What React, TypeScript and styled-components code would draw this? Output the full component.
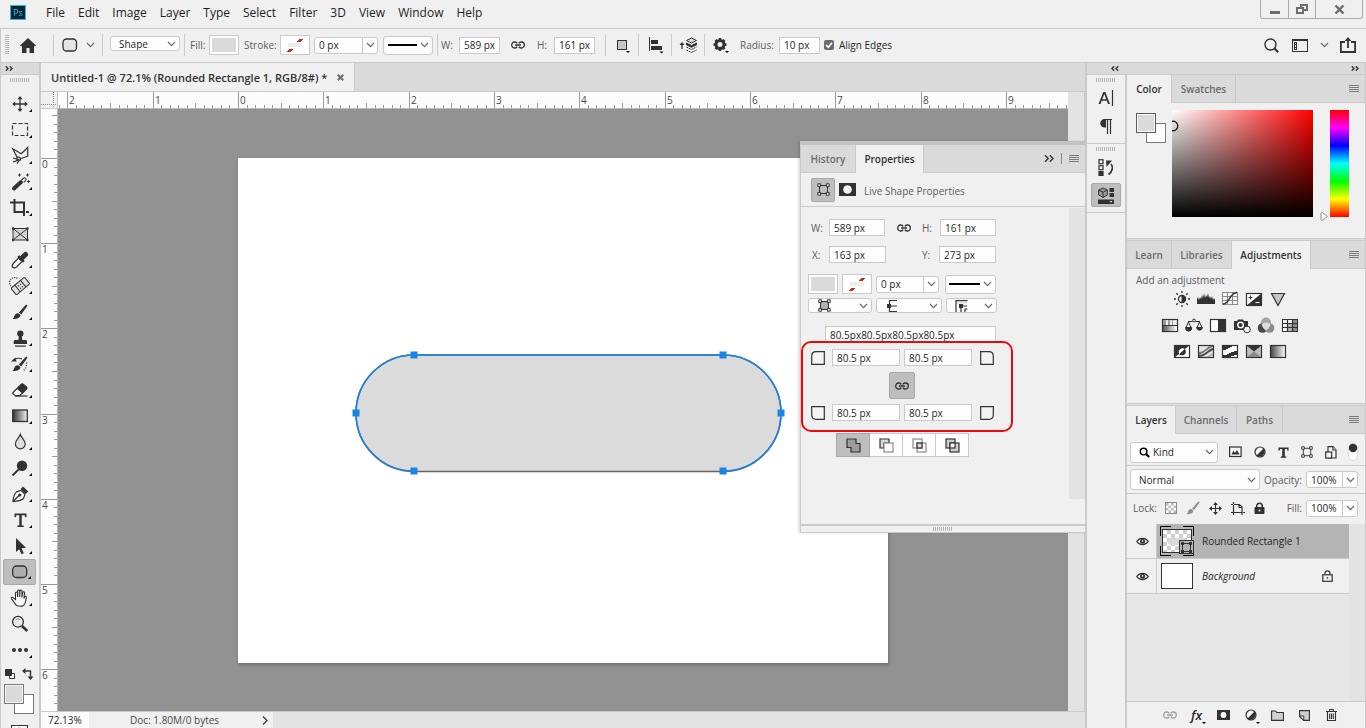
import React, { useLayoutEffect, useRef, useState } from 'react';
import styled, { createGlobalStyle, css } from 'styled-components';

const INK = '#323232';
const LINE = '#cacaca';
const PANEL = '#f0f0f0';
const SUNK = '#dadada';
const UI = '"Open Sans", "Noto Sans", sans-serif';

const Global = createGlobalStyle`
  *, *::before, *::after { box-sizing: border-box; }
  html, body { margin: 0; padding: 0; background: ${PANEL}; overflow: hidden; }
  body, button, input, select { font-family: ${UI}; font-size: 10px; color: #262626; line-height: 14px; }
  button { border: 0; background: none; padding: 0; margin: 0; }
  input, select { margin: 0; }
  svg { display: block; flex: none; }
`;

/* ---------- shared parts ---------- */

const Shell = styled.div`
  display: flex;
  flex-direction: column;
  height: 100vh;
  background: ${PANEL};
`;

const Spacer = styled.span<{ $w: number }>`
  width: ${(p) => p.$w}px;
  flex: none;
`;

const Gap = styled.div<{ $h: number }>`
  height: ${(p) => p.$h}px;
`;

const Field = styled.input<{ $w?: number }>`
  width: ${(p) => p.$w ?? 41}px;
  height: 17px;
  padding: 0 4px;
  border: 1px solid ${LINE};
  background: #fdfdfd;
  outline: none;
  flex: none;
`;

const Label = styled.label<{ $w?: number }>`
  color: #5c5c5c;
  white-space: nowrap;
  ${(p) => p.$w && css`width: ${p.$w}px;`}
  flex: none;
`;

const Caption = styled.span<{ $w: number }>`
  width: ${(p) => p.$w}px;
  color: #5c5c5c;
  white-space: nowrap;
  flex: none;
`;

const SelectBox = styled.span<{ $w: number; $h: number }>`
  position: relative;
  display: flex;
  align-items: center;
  width: ${(p) => p.$w}px;
  height: ${(p) => p.$h}px;
  border: 1px solid ${LINE};
  border-radius: 3px;
  background: #fdfdfd;
  flex: none;
  select {
    appearance: none;
    width: 100%;
    height: 100%;
    border: 0;
    background: none;
    padding: 0 16px 0 8px;
    outline: none;
  }
`;

const KindSelect = styled(SelectBox)`
  select { padding-left: 22px; }
`;

const OverLeft = styled.span<{ $x?: number }>`
  position: absolute;
  left: ${(p) => p.$x ?? 8}px;
  pointer-events: none;
`;
const OverRight = styled.span`
  position: absolute;
  right: 3px;
  pointer-events: none;
`;

const ComboBox = styled.span<{ $w: number }>`
  display: flex;
  align-items: stretch;
  width: ${(p) => p.$w}px;
  height: 17px;
  border: 1px solid ${LINE};
  border-radius: 3px;
  background: #fdfdfd;
  flex: none;
  input {
    flex: 1;
    min-width: 0;
    border: 0;
    background: none;
    padding: 0 4px;
    outline: none;
  }
  button {
    width: 15px;
    border-left: 1px solid ${LINE};
    display: grid;
    place-items: center;
  }
`;

const Swatch = styled.button`
  width: 30px;
  height: 20px;
  border: 1px solid ${LINE};
  background: #fff;
  padding: 2px;
  flex: none;
`;
const SwatchFill = styled.span`
  display: block;
  height: 14px;
  background: ${SUNK};
`;

const IconButton = styled.button<{ $w?: number; $h?: number; $on?: boolean }>`
  display: grid;
  place-items: center;
  width: ${(p) => p.$w ?? 24}px;
  height: ${(p) => p.$h ?? 24}px;
  flex: none;
  ${(p) => p.$on && css`
    background: #bebebe;
    border: 1px solid #a8a8a8;
    border-radius: 2px;
  `}
`;

const Chevron = () => (
  <svg width="9" height="6" viewBox="0 0 9 6" fill="none" stroke="#6a6a6a" strokeWidth="1.2">
    <path d="M1 1l3.5 3.6L8 1" />
  </svg>
);

const LinkIcon = ({ color = INK }: { color?: string }) => (
  <svg width="14" height="8" viewBox="0 0 14 8" fill="none" stroke={color} strokeWidth="1.3">
    <path d="M6.2 2.4A2.6 2.9 0 0 0 3.8 1H3.4a2.7 3 0 0 0 0 6h.4a2.6 2.9 0 0 0 2.4-1.4M7.8 2.4A2.6 2.9 0 0 1 10.2 1h.4a2.7 3 0 0 1 0 6h-.4a2.6 2.9 0 0 1-2.4-1.4M4 4h6" />
  </svg>
);

const NoStroke = () => (
  <svg width="24" height="14" viewBox="0 0 24 14" shapeRendering="crispEdges">
    <rect x="5" y="5" width="14" height="4" fill="#ededed" />
    <path d="M5 13h3l2-2h-3zM15 3h3l2-2h-3z" fill="#d3242a" stroke="#d3242a" strokeWidth="1" />
  </svg>
);

const StrokeLine = ({ w }: { w: number }) => (
  <svg width={w} height="2" viewBox={`0 0 ${w} 2`}>
    <rect width={w} height="2" fill="#000" />
  </svg>
);

const GripH = () => (
  <svg width="20" height="4" viewBox="0 0 20 4" shapeRendering="crispEdges">
    <path d="M.5 0v4M2.5 0v4M4.5 0v4M6.5 0v4M8.5 0v4M10.5 0v4M12.5 0v4M14.5 0v4M16.5 0v4M18.5 0v4" stroke="#b4b4b4" />
  </svg>
);

const DoubleArrow = ({ left }: { left?: boolean }) => (
  <svg width="8" height="5" viewBox="0 0 8 5" fill="none" stroke={INK} strokeWidth="1.4">
    {left ? <path d="M3.2 .3L1 2.5l2.2 2.2M7.2 .3L5 2.5l2.2 2.2" /> : <path d="M.8 .3L3 2.5.8 4.7M4.8 .3L7 2.5 4.8 4.7" />}
  </svg>
);

const PanelMenuIcon = () => (
  <svg width="10" height="8" viewBox="0 0 10 8" shapeRendering="crispEdges">
    <path d="M0 .5h10M0 2.5h10M0 4.5h10M0 6.5h10" stroke="#7c7c7c" />
  </svg>
);

const TypeIcon = ({ s = 12 }: { s?: number }) => (
  <svg width={s} height={s} viewBox="0 0 12 12">
    <path d="M.5.5h11v3.6h-1.1L9.8 2.2H7.4v8l1.7.3v1.2H2.9v-1.2l1.700-.3v-8H2.200l-.6 1.900H.5z" fill={INK} />
  </svg>
);

const TransformIcon = ({ s = 13, fill = 'none' }: { s?: number; fill?: string }) => (
  <svg width={s} height={s} viewBox="0 0 13 13" fill="none" stroke={INK}>
    <path d="M2 2.5h9M2 10.5h9M2.500 2v9M10.5 2v9" />
    <rect x="3" y="3" width="7" height="7" fill={fill} stroke="none" />
    <path d="M.8.8h2.800v2.800H.8zM9.400.8h2.800v2.800H9.400zM.8 9.400h2.800v2.800H.8zM9.400 9.400h2.800v2.800H9.400z" fill={PANEL} />
  </svg>
);

const BrushPaths = ({ color = INK }: { color?: string }) => (
  <g fill={color}>
    <path d="M19 4.800c.6.500.2 1.300-.4 2.200l-5.400 7.400-2.300-1.900 6-6.700c.7-.8 1.500-1.500 2.100-1z" />
    <path d="M10.200 13.200l2.300 1.900c-.3 2.600-2.900 4.200-8.200 4 1.600-.8 1.700-1.900 2.200-3.500.6-1.700 2-2.700 3.700-2.400z" />
  </g>
);

const ContrastIcon = () => (
  <svg width="12" height="12" viewBox="0 0 12 12">
    <circle cx="6" cy="6" r="5" fill="#f6f6f6" stroke={INK} strokeWidth="1.2" />
    <path d="M9.500 2.500A5 5 0 0 1 2.500 9.500z" fill={INK} />
  </svg>
);

/* ---------- menu bar ---------- */

const MenuBar = styled.header`
  display: flex;
  align-items: flex-start;
  height: 29px;
  border-bottom: 1px solid ${LINE};
  padding-left: 10px;
  flex: none;
`;
const PsBadge = styled.span`
  width: 16px;
  height: 15px;
  margin: 5px 14px 0 0;
  border: 1px solid #12c1f3;
  background: #0b1f2d;
  color: #22c4f5;
  font-size: 9px;
  line-height: 13px;
  text-align: center;
`;
const MenuList = styled.nav`
  display: flex;
  height: 26px;
  button {
    font-size: 12px;
    padding: 0 7px 0 6px;
    color: #1e1e1e;
  }
`;
const WindowButtons = styled.div`
  display: flex;
  height: 19px;
  margin: 0 3px 0 auto;
  border: 1px solid #a9a9a9;
  border-top: 0;
  border-radius: 0 0 3px 3px;
  button {
    width: 27px;
    display: grid;
    place-items: center;
  }
  button + button { border-left: 1px solid #a9a9a9; }
  button:last-child { width: 47px; }
`;

const menus = ['File', 'Edit', 'Image', 'Layer', 'Type', 'Select', 'Filter', '3D', 'View', 'Window', 'Help'];

const TopMenu = () => (
  <MenuBar>
    <PsBadge>Ps</PsBadge>
    <MenuList>
      {menus.map((m) => (
        <button key={m}>{m}</button>
      ))}
    </MenuList>
    <WindowButtons>
      <button aria-label="Minimize">
        <svg width="10" height="12" viewBox="0 0 10 12"><rect y="8" width="10" height="3" fill="#6d6d6d" /></svg>
      </button>
      <button aria-label="Restore">
        <svg width="12" height="10" viewBox="0 0 12 10" fill="#6d6d6d" fillRule="evenodd" shapeRendering="crispEdges">
          <path d="M4 0h8v7H8V5h2V2H6v1H4zM0 3h8v7H0zM2 5h4v3H2z" />
        </svg>
      </button>
      <button aria-label="Close">
        <svg width="11" height="9" viewBox="0 0 11 9" stroke="#6d6d6d" strokeWidth="2.4"><path d="M1.500.5l8 8M9.500.5l-8 8" /></svg>
      </button>
    </WindowButtons>
  </MenuBar>
);

/* ---------- options bar ---------- */

const OptionsBar = styled.section`
  display: flex;
  align-items: center;
  height: 34px;
  border-bottom: 1px solid ${LINE};
  border-left: 1px solid ${LINE};
  padding: 0 9px 1px 4px;
  flex: none;
`;
const Group = styled.div<{ $w: number; $pad?: number; $gap?: number; $last?: boolean; $lift?: number }>`
  display: flex;
  align-items: center;
  width: ${(p) => p.$w}px;
  height: 22px;
  padding-left: ${(p) => p.$pad ?? 0}px;
  padding-bottom: ${(p) => p.$lift ?? 0}px;
  gap: ${(p) => p.$gap ?? 0}px;
  border-right: ${(p) => (p.$last ? '0' : `1px solid ${LINE}`)};
  flex: none;
`;
const CheckLabel = styled.label`
  display: flex;
  align-items: center;
  gap: 5px;
  margin-left: 4px;
  white-space: nowrap;
`;
const CheckWrap = styled.span`
  display: grid;
  place-items: center;
  > * { grid-area: 1 / 1; pointer-events: none; }
  input {
    appearance: none;
    pointer-events: auto;
    width: 10px;
    height: 10px;
    border-radius: 2px;
    background: #6b6b6b;
  }
`;
const Push = styled.div`
  display: flex;
  align-items: center;
  gap: 10px;
  margin-left: auto;
`;

const Options = () => (
  <OptionsBar>
    <Group $w={49} $gap={10}>
      <svg width="4" height="20" viewBox="0 0 4 20" shapeRendering="crispEdges">
        <path d="M0 .5h4M0 2.5h4M0 4.5h4M0 6.5h4M0 8.5h4M0 10.5h4M0 12.5h4M0 14.5h4M0 16.5h4M0 18.5h4" stroke="#b4b4b4" />
      </svg>
      <IconButton $w={18} aria-label="Home">
        <svg width="16" height="15" viewBox="0 0 16 15"><path d="M8 0l8 7.500-1 1-1-.6V15H9.500v-5h-3v5H2V7.900l-1 .6-1-1z" fill={INK} /></svg>
      </IconButton>
    </Group>
    <Group $w={49} $pad={8} $gap={8}>
      <IconButton $w={16} aria-label="Rounded rectangle tool">
        <svg width="16" height="14" viewBox="0 0 16 14"><rect x="1" y="1" width="13.5" height="12" rx="3.5" fill="#e4e4e4" stroke={INK} strokeWidth="1.3" /></svg>
      </IconButton>
      <Chevron />
    </Group>
    <Group $w={82} $pad={7} $lift={3}>
      <SelectBox $w={70} $h={15}>
        <select aria-label="Tool mode" defaultValue="Shape"><option>Shape</option></select>
        <OverRight><Chevron /></OverRight>
      </SelectBox>
    </Group>
    <Group $w={253} $pad={5}>
      <Caption $w={19}>Fill:</Caption>
      <Swatch aria-label="Fill colour"><SwatchFill /></Swatch>
      <Spacer $w={5} />
      <Caption $w={36}>Stroke:</Caption>
      <Swatch aria-label="Stroke colour"><NoStroke /></Swatch>
      <Spacer $w={4} />
      <ComboBox $w={64}><input aria-label="Stroke width" defaultValue="0 px" /><button aria-label="Stroke width list"><Chevron /></button></ComboBox>
      <Spacer $w={5} />
      <SelectBox $w={50} $h={19}>
        <select aria-label="Stroke type"><option></option></select>
        <OverLeft $x={4}><StrokeLine w={29} /></OverLeft>
        <OverRight><Chevron /></OverRight>
      </SelectBox>
    </Group>
    <Group $w={168} $pad={3}>
      <Label $w={18} htmlFor="ow">W:</Label>
      <Field id="ow" defaultValue="589 px" />
      <Spacer $w={11} />
      <LinkIcon />
      <Spacer $w={12} />
      <Label $w={17} htmlFor="oh">H:</Label>
      <Field id="oh" defaultValue="161 px" />
    </Group>
    <Group $w={33} $pad={6}>
      <IconButton $w={22} aria-label="Path operations">
        <svg width="16" height="16" viewBox="0 0 16 16"><rect x="2.500" y="3.500" width="9" height="9" fill="#c8c8c8" stroke={INK} /><path d="M11 14h4l-2 2z" fill="#000" /></svg>
      </IconButton>
    </Group>
    <Group $w={33} $pad={6}>
      <IconButton $w={22} aria-label="Path alignment">
        <svg width="16" height="18" viewBox="0 0 16 18"><path d="M1.500 1v14" stroke={INK} /><path d="M3 4h7v4H3zM3 10h11v4H3z" fill={INK} /><path d="M11.500 15.500h4l-2 2z" fill="#000" /></svg>
      </IconButton>
    </Group>
    <Group $w={33} $pad={6}>
      <IconButton $w={22} aria-label="Path arrangement">
        <svg width="20" height="17" viewBox="0 0 20 17" fill="none" stroke={INK}>
          <path d="M3 12V6" strokeWidth="1.300" /><path d="M.5 8L3 5l2.500 3z" fill={INK} stroke="none" />
          <path d="M12.500 1l5 2.500-5 2.500-5-2.500z" fill="#d8d8d8" /><path d="M7.500 6l5 2.500 5-2.500v1.800l-5 2.500-5-2.500z" fill={INK} />
          <path d="M7.500 10l5 2.500 5-2.500M7.500 13l5 2.500 5-2.500" strokeDasharray="2 .6" />
        </svg>
      </IconButton>
    </Group>
    <Group $w={115} $pad={4} $last>
      <IconButton $w={24} aria-label="Shape settings">
        <svg width="18" height="18" viewBox="0 0 18 18">
          <circle cx="8" cy="8.500" r="4" fill="none" stroke={INK} strokeWidth="3" />
          <path d="M8 2v3M8 12v3M1.500 8.500h3M11.500 8.500h3M3.400 3.900l2 2M10.600 11.100l2 2M12.600 3.900l-2 2M5.400 11.100l-2 2" stroke={INK} strokeWidth="2.400" />
          <path d="M13 15h4l-2 2z" fill="#000" />
        </svg>
      </IconButton>
      <Spacer $w={7} />
      <Label $w={39} htmlFor="or">Radius:</Label>
      <Field id="or" defaultValue="10 px" />
    </Group>
    <CheckLabel>
      <CheckWrap>
        <input type="checkbox" defaultChecked />
        <svg width="10" height="10" viewBox="0 0 10 10" fill="none" stroke="#fff" strokeWidth="1.600"><path d="M2 5l2.300 2.300L8 2.700" /></svg>
      </CheckWrap>
      Align Edges
    </CheckLabel>
    <Push>
      <IconButton $w={18} aria-label="Search">
        <svg width="15" height="15" viewBox="0 0 15 15" fill="none" stroke={INK} strokeWidth="1.400"><circle cx="6.500" cy="6.500" r="5.500" /><path d="M10.500 10.500l3.700 3.700" strokeWidth="2" /></svg>
      </IconButton>
      <IconButton $w={20} aria-label="Workspace">
        <svg width="16" height="13" viewBox="0 0 16 13" fill={INK} fillRule="evenodd" shapeRendering="crispEdges">
          <path d="M0 0h16v13H0zM1 2h14v10H1z" /><path d="M2 3h3v8H2zM3 4h1v1H3zM3 6h1v2H3zM3 9h1v1H3z" />
        </svg>
      </IconButton>
      <Chevron />
      <IconButton $w={18} aria-label="Share">
        <svg width="16" height="16" viewBox="0 0 16 16" fill="none" stroke={INK} strokeWidth="1.800"><path d="M5 5H.9v10h14.200V5H11M8 11V2.500" /><path d="M8 0l3.300 4H4.700z" fill={INK} stroke="none" /></svg>
      </IconButton>
    </Push>
  </OptionsBar>
);

/* ---------- tool box ---------- */

const Main = styled.main`
  display: flex;
  flex: 1;
  min-height: 0;
`;
const ToolColumn = styled.aside`
  width: 41px;
  border-left: 1px solid ${LINE};
  border-right: 2px solid ${LINE};
  overflow: hidden;
  flex: none;
`;
const DockHead = styled.div`
  display: flex;
  align-items: center;
  justify-content: space-between;
  height: 12px;
  background: ${SUNK};
  border-bottom: 1px solid ${LINE};
  padding: 0 6px 0 4px;
  flex: none;
`;
const ToolGrip = styled.div`
  display: flex;
  height: 16px;
  padding: 3px 0 0 9px;
`;
const ToolButton = styled(IconButton)`
  position: relative;
  width: 33px;
  height: 26px;
  margin-left: 2px;
  padding-left: 1px;
`;
const Flyout = styled.svg`
  position: absolute;
  right: 4px;
  bottom: 5px;
`;
const ToolFoot = styled.div`
  padding: 5px 0 0 3px;
`;

const tools: { name: string; flat?: boolean; on?: boolean; art: React.ReactNode }[] = [
  { name: 'Move', art: <><path d="M12 6v12M6 12h12" stroke={INK} strokeWidth="1.300" /><path d="M12 4l2.600 3.200H9.400zM12 20l2.600-3.200H9.400zM4 12l3.200-2.600v5.200zM20 12l-3.200-2.600v5.200z" fill={INK} /></> },
  { name: 'Marquee', art: <rect x="4.500" y="5.500" width="15" height="12" fill="none" stroke={INK} strokeDasharray="4 2" strokeWidth="1.200" /> },
  { name: 'Lasso', art: <g fill="none" stroke={INK} strokeWidth="1.200"><path d="M9.500 14L4.700 4.700l8.600 5 6.400-6.200v8.700l-7.200 2.600" /><circle cx="10.700" cy="15" r="1.800" /><path d="M9 16c-1 1.500-2.500 2-4 1.500M10.500 17l-1.500 2.600M5 14l7 2" /></g> },
  { name: 'Magic wand', art: <g stroke={INK}><path d="M6 18.500l7-6.500" strokeWidth="4" strokeLinecap="round" /><path d="M13.500 10l2-1.900c1.500-1 3.300.8 2.200 2.300l-2 1.900" fill="#f6f6f6" strokeWidth="1.100" /><path d="M11.500 3.500v3M10 5h3M19.500 3.500v3M18 5h3M20.500 10v3M19 11.500h3" /></g> },
  { name: 'Crop', art: <path d="M6.500 3v13H16M2 6.500h14V20M18 16h3M2 6.500h3" fill="none" stroke={INK} strokeWidth="2" /> },
  { name: 'Frame', art: <g stroke={INK} fill="none"><rect x="5" y="6.500" width="14.500" height="11.500" fill="#d4d4d4" /><path d="M5 6.500L19.500 18M19.500 6.500L5 18" /><path d="M4 6.500h2M18.500 6.500h2M4 18h2M18.500 18h2" strokeWidth="2.600" /></g>, flat: true },
  { name: 'Eyedropper', art: <g stroke={INK}><path d="M11 9.500l3.500 3.500-6 6c-1.400 1-3 1-3.800.3-.7-.8-.5-2.300.5-3.800z" fill="#fafafa" strokeWidth="1.200" /><path d="M10.200 8.200l5.600 5.600" strokeWidth="2.600" /><path d="M13.500 10.500l4-4" strokeWidth="5" strokeLinecap="round" /></g> },
  { name: 'Healing brush', art: <g stroke={INK} fill="none"><g transform="rotate(-40 12 12)"><rect x="3.500" y="8" width="17.500" height="8.500" rx="1" fill="#e2e2e2" /><path d="M8.500 8v8.500M16 8v8.500" /><path d="M10.500 11h1M13 11h1M10.500 14h1M13 14h1" strokeWidth="1.400" /></g><path d="M3 12a4.500 4.500 0 0 1 7-7" strokeDasharray="1 1.200" strokeWidth="1.300" /></g> },
  { name: 'Brush', art: <BrushPaths /> },
  { name: 'Clone stamp', art: <g fill={INK}><circle cx="12.300" cy="7.600" r="3.200" /><path d="M11 9h2.600l.6 5h3.300c1 0 1.500.7 1.500 1.500V18H5.700v-2.500c0-.8.500-1.500 1.500-1.500h3.200zM7 19.500h10.800v1.200H7z" /></g> },
  { name: 'History brush', art: <><BrushPaths /><path d="M5 8.500c3-2.500 6-2.800 9-1.500" fill="none" stroke={INK} strokeWidth="1.200" /><path d="M3 9.500L7.500 5.500l1 4z" fill={INK} /><path d="M18.500 10.500c.5 4-1 7-4 8.500" fill="none" stroke={INK} strokeDasharray="1 1.500" strokeWidth="1.300" /></> },
  { name: 'Eraser', art: <g stroke={INK} strokeWidth="1.200"><path d="M5 14.500L13.500 6.200c.5-.5 1-.5 1.600 0l3.400 3c.5.500.5 1 0 1.500l-6.800 7H7.300l-2.300-2c-.4-.4-.4-.8 0-1.200z" fill="#fafafa" /><path d="M9.500 10.500l4-4c.5-.5 1-.5 1.600 0l3.400 3c.5.500.5 1 0 1.500l-4 4z" fill={INK} /><path d="M7 18h12.500" /></g> },
  { name: 'Gradient', art: <><defs><linearGradient id="tg"><stop stopColor="#333" /><stop offset="1" stopColor="#f4f4f4" /></linearGradient></defs><rect x="4.700" y="6" width="14.600" height="11.500" fill="url(#tg)" stroke={INK} strokeWidth="1.300" /></> },
  { name: 'Blur', art: <path d="M12.300 4.500c1 3.400 4.900 5.500 4.900 9.400a4.900 4.900 0 0 1-9.800 0c0-3.900 3.900-6 4.900-9.400z" fill="#dedede" stroke={INK} strokeWidth="1.200" /> },
  { name: 'Dodge', art: <><circle cx="14" cy="9.800" r="5.200" fill={INK} /><path d="M10.500 13.500l-6 6" stroke={INK} strokeWidth="1.800" /></> },
  { name: 'Pen', art: <g stroke={INK} fill="none" strokeWidth="1.200"><path d="M5 19.500c.3-4 1.500-7.800 3.500-9.600l4.500-1.500 4 3.800-1.500 4.300c-2 1.800-6 2.800-10.500 3z" fill="#f6f6f6" /><path d="M5 19.500l6-6" /><circle cx="11.800" cy="13" r="1" fill={INK} /><path d="M13.800 5.800l5.200 5" strokeWidth="3.600" /></g> },
  { name: 'Type', art: <path d="M6.500 5.500h12v3.800h-1.200l-.7-2H13.700v10l2 .4v1.200H9.300v-1.200l2-.4v-10H8.400l-.7 2H6.500z" fill={INK} /> },
  { name: 'Path selection', art: <path d="M8 4v14l3.200-2.800 2.200 5 2.400-1-2.200-5 4.400-.4z" fill={INK} /> },
  { name: 'Rounded rectangle', on: true, art: <rect x="4.700" y="6" width="14" height="11.500" rx="3.800" fill="#adadad" stroke={INK} strokeWidth="1.300" /> },
  { name: 'Hand', art: <path d="M8.500 19.500C6.500 17 5 14.500 3.500 12.800c-.8-1 .6-2 1.600-1.200l2.400 2V7c0-1.400 1.800-1.400 1.900 0l.3 4V5c0-1.400 2-1.400 2 0v6l.3-6c.1-1.300 2-1.200 2 0l-.1 6.500.8-5c.3-1.200 2-.9 1.800.4l-.6 5.600.7-1.600c.4-1 1.800-.7 1.700.4-.3 3-1 6.700-2.800 8.200-1.400 1-5 1-7 0z" fill="#fafafa" stroke={INK} strokeWidth="1.100" /> },
  { name: 'Zoom', flat: true, art: <g fill="none" stroke={INK}><circle cx="10" cy="9.800" r="5.400" fill="#ebebeb" strokeWidth="1.300" /><path d="M14 14l5.300 5" strokeWidth="2.600" /><path d="M8 8a3 3 0 0 1 4-.5" stroke="#888" /></g> },
  { name: 'Edit toolbar', art: <g fill={INK}><circle cx="6" cy="12" r="2" /><circle cx="12" cy="12" r="2" /><circle cx="18" cy="12" r="2" /></g> },
];

const ToolBox = () => (
  <ToolColumn>
    <DockHead><DoubleArrow /></DockHead>
    <ToolGrip><GripH /></ToolGrip>
    {tools.map((t) => (
      <ToolButton key={t.name} $on={t.on} aria-label={t.name}>
        <svg width="24" height="24" viewBox="0 0 24 24">{t.art}</svg>
        {!t.flat && <Flyout width="3" height="3" viewBox="0 0 3 3"><path d="M3 0v3H0z" fill="#000" /></Flyout>}
      </ToolButton>
    ))}
    <ToolFoot>
      <svg width="32" height="64" viewBox="0 0 32 64">
        <path d="M5.500 5.500h5v5h-5z" fill="#fff" stroke={INK} /><path d="M1 1h7v7H1z" fill={INK} />
        <path d="M20 3h6.500v6" fill="none" stroke={INK} strokeWidth="1.400" /><path d="M18 3l3.500-3v6zM26.500 12l-3-3.500h6z" fill={INK} />
        <rect x="10.500" y="26.500" width="19" height="19" fill="#fff" stroke="#7a7a7a" />
        <rect x=".5" y="16.500" width="19" height="19" fill={SUNK} stroke="#7a7a7a" />
        <rect x="1.500" y="17.500" width="17" height="17" fill="none" stroke="#f6f6f6" />
        <rect x="7.500" y="57.500" width="16" height="11" fill="#fff" stroke={INK} /><circle cx="15.500" cy="63" r="3" fill="none" stroke={INK} strokeDasharray="1 1" />
      </svg>
    </ToolFoot>
  </ToolColumn>
);

/* ---------- document ---------- */

const DocColumn = styled.section`
  position: relative;
  display: flex;
  flex-direction: column;
  flex: 1;
  min-width: 0;
`;
const DocTabs = styled.div`
  display: flex;
  height: 29px;
  background: ${SUNK};
  border-bottom: 1px solid ${LINE};
  flex: none;
`;
const DocTab = styled.div`
  display: flex;
  align-items: center;
  gap: 10px;
  padding: 1px 10px 0;
  background: ${PANEL};
  border-right: 1px solid ${LINE};
  font-weight: 600;
  font-size: 11px;
  color: ${INK};
  white-space: nowrap;
`;
const DocGrid = styled.div`
  display: grid;
  flex: 1;
  min-height: 0;
  grid-template-columns: 17px minmax(0, 1fr) 17px;
  grid-template-rows: 17px minmax(0, 1fr) 17px;
`;
const RulerX = styled.div`
  background: #fcfcfc;
  border-bottom: 1px solid #b9b9b9;
  overflow: hidden;
`;
const RulerY = styled.div`
  background: #fcfcfc;
  border-right: 1px solid #b9b9b9;
  overflow: hidden;
`;
const Corner = styled.div`
  background: ${PANEL};
  border-right: 1px solid ${LINE};
  border-bottom: 1px solid ${LINE};
`;
const ScrollTrack = styled.div`
  grid-row: span 2;
  background: #e3e3e3;
  border-right: 1px solid ${LINE};
`;
const Canvas = styled.div`
  position: relative;
  background: #929292;
  overflow: hidden;
`;
const Artboard = styled.div`
  position: absolute;
  left: 180px;
  top: 49px;
  width: 650px;
  height: 505px;
  background: #fff;
  box-shadow: 1px 2px 4px rgba(0, 0, 0, 0.25);
`;
const StatusBar = styled.footer`
  grid-column: span 3;
  display: flex;
  align-items: center;
  background: #e3e3e3;
  border-top: 1px solid ${LINE};
  color: #4a4a4a;
`;
const ZoomBox = styled.input`
  width: 48px;
  height: 16px;
  border: 0;
  background: #fdfdfd;
  padding: 0 0 0 7px;
`;
const DocInfo = styled.div`
  display: flex;
  align-items: center;
  justify-content: space-between;
  width: 184px;
  height: 16px;
  padding: 0 5px 0 41px;
  background: ${PANEL};
`;

const useSize = () => {
  const ref = useRef<HTMLDivElement>(null);
  const [size, setSize] = useState({ w: 0, h: 0 });
  useLayoutEffect(() => {
    const read = () => ref.current && setSize({ w: ref.current.clientWidth, h: ref.current.clientHeight });
    read();
    window.addEventListener('resize', read);
    return () => window.removeEventListener('resize', read);
  }, []);
  return { ref, size };
};

// Ten divisions to an inch; "origin" is where the artboard begins.
const ruleMarks = (origin: number, step: number, length: number) => {
  const first = -Math.floor((origin * 10) / step);
  const last = Math.floor(((length - origin) * 10) / step);
  return Array.from({ length: Math.max(0, last - first + 1) }, (_, i) => {
    const m = first + i;
    return { m, at: Math.round(origin + (m * step) / 10), len: m % 10 === 0 ? 16 : m % 5 === 0 ? 5 : 3 };
  });
};

const HorizontalRuler = () => {
  const { ref, size } = useSize();
  const marks = ruleMarks(180, 85.35, size.w);
  return (
    <RulerX ref={ref}>
      <svg width="100%" height="16">
        {marks.map(({ m, at, len }) => <path key={m} d={`M${at + 0.5} ${16 - len}v${len}`} stroke="#9a9a9a" />)}
        {marks.filter(({ m }) => m % 10 === 0).map(({ m, at }) => (
          <text key={m} x={at + 2} y="12" fontSize="10" fill="#4a4a4a">{Math.abs(m / 10)}</text>
        ))}
      </svg>
    </RulerX>
  );
};

const VerticalRuler = () => {
  const { ref, size } = useSize();
  const marks = ruleMarks(49, 85.2, size.h);
  return (
    <RulerY ref={ref}>
      <svg width="16" height="100%">
        {marks.map(({ m, at, len }) => <path key={m} d={`M${16 - len} ${at + 0.5}h${len}`} stroke="#9a9a9a" />)}
        {marks.filter(({ m }) => m % 10 === 0).map(({ m, at }) => (
          <text key={m} x="1" y={at + 10} fontSize="10" fill="#4a4a4a">{Math.abs(m / 10)}</text>
        ))}
      </svg>
    </RulerY>
  );
};

const anchors = [[59, 1], [368, 1], [1, 59], [426, 59], [59, 117], [368, 117]];

const ShapeArt = styled.svg`
  position: absolute;
  left: 117px;
  top: 196px;
  overflow: visible;
`;

const Document = () => (
  <DocColumn>
    <DocTabs>
      <DocTab>
        Untitled-1 @ 72.1% (Rounded Rectangle 1, RGB/8#) *
        <button aria-label="Close document">
          <svg width="7" height="7" viewBox="0 0 7 7" stroke="#6d6d6d" strokeWidth="2"><path d="M.7.7l5.600 5.600M6.300.7L.7 6.300" /></svg>
        </button>
      </DocTab>
    </DocTabs>
    <DocGrid>
      <Corner>
        <svg width="16" height="16" stroke="#8a8a8a" strokeDasharray="1 1"><path d="M12.500 0v16M0 12.500h16" /></svg>
      </Corner>
      <HorizontalRuler />
      <ScrollTrack />
      <VerticalRuler />
      <Canvas>
        <Artboard>
          <ShapeArt width="428" height="119" viewBox="0 0 428 119">
            <rect x="1" y="1" width="425" height="116.500" rx="58.200" fill="#dbdbdb" stroke="#6a6560" strokeWidth="1.500" />
            <path d="M59 117A58 58 0 0 1 59 1H368A58 58 0 0 1 368 117" fill="none" stroke="#1a84e5" strokeWidth="1.600" />
            {anchors.map(([x, y]) => (
              <rect key={`${x}-${y}`} x={x - 3} y={y - 3} width="6" height="6" fill="#1a84e5" stroke="#1a84e5" />
            ))}
          </ShapeArt>
        </Artboard>
      </Canvas>
      <StatusBar>
        <ZoomBox aria-label="Zoom" defaultValue="72.13%" />
        <DocInfo>
          Doc: 1.80M/0 bytes
          <svg width="6" height="9" viewBox="0 0 6 9" fill="none" stroke={INK} strokeWidth="1.200"><path d="M1 .5l4 4-4 4" /></svg>
        </DocInfo>
      </StatusBar>
    </DocGrid>
    <PropertiesPanel />
  </DocColumn>
);

/* ---------- tab strips ---------- */

const TabStrip = styled.div`
  display: flex;
  align-items: center;
  height: 28px;
  background: ${SUNK};
  border-bottom: 1px solid ${LINE};
  flex: none;
`;
const Tab = styled.button<{ $w: number; $on?: boolean }>`
  width: ${(p) => p.$w}px;
  height: ${(p) => (p.$on ? 28 : 27)}px;
  align-self: flex-start;
  background: ${(p) => (p.$on ? PANEL : 'transparent')};
  color: ${(p) => (p.$on ? INK : '#6a6a6a')};
  border-right: 1px solid ${LINE};
  font-weight: 600;
  white-space: nowrap;
  flex: none;
`;
const StripEnd = styled.span`
  display: flex;
  align-items: center;
  gap: 7px;
  margin-left: auto;
  padding-right: 6px;
`;

/* ---------- floating properties panel ---------- */

const Floating = styled.section`
  position: absolute;
  top: 78px;
  right: -1px;
  width: 286px;
  height: 392px;
  display: flex;
  flex-direction: column;
  background: ${PANEL};
  border: 1px solid ${LINE};
  border-top: 4px solid #c2c2c2;
  box-shadow: -2px 0 2px rgba(0, 0, 0, 0.12);
`;
const KindRow = styled.div`
  display: flex;
  align-items: center;
  gap: 4px;
  height: 34px;
  padding-left: 10px;
  border-bottom: 1px solid ${LINE};
  color: #5c5c5c;
  flex: none;
  > span { margin-left: 4px; padding-top: 2px; }
`;
const PropsArea = styled.div`
  display: flex;
  justify-content: space-between;
  flex: 1;
`;
const PropsScroll = styled.div`
  width: 16px;
  height: 291px;
  margin-top: 1px;
  background: #e3e3e3;
`;
const PropsBody = styled.div`
  position: relative;
  width: 212px;
  padding-top: 12px;
`;
const PropRow = styled.div<{ $h: number; $pad?: number; $gap?: number }>`
  display: flex;
  align-items: center;
  height: ${(p) => p.$h}px;
  padding-left: ${(p) => p.$pad ?? 7}px;
  gap: ${(p) => p.$gap ?? 0}px;
`;
const HighlightBox = styled.div`
  position: absolute;
  left: 0;
  top: 134px;
  width: 212px;
  height: 91px;
  border: 2px solid #f0060d;
  border-radius: 10px;
  pointer-events: none;
`;
const OpButton = styled.button<{ $on?: boolean }>`
  display: grid;
  place-items: center;
  width: ${(p) => (p.$on ? 34 : 33)}px;
  height: 24px;
  border: 1px solid ${(p) => (p.$on ? '#a8a8a8' : LINE)};
  border-left-width: ${(p) => (p.$on ? 1 : 0)}px;
  background: ${(p) => (p.$on ? '#bebebe' : '#fdfdfd')};
`;
const PanelFoot = styled.div`
  display: grid;
  place-items: center;
  height: 8px;
  border-top: 2px solid ${LINE};
`;

const CornerIcon = ({ rot }: { rot: number }) => (
  <svg width="14" height="14" viewBox="0 0 14 14">
    <path d="M13.300 .7V13.300H.7V5.200C.7 2.500 2.500.7 5.200.7z" transform={`rotate(${rot} 7 7)`} fill="#f4f4f4" stroke={INK} strokeWidth="1.200" />
  </svg>
);

const PropertiesPanel = () => (
  <Floating>
    <TabStrip>
      <Tab $w={55}>History</Tab>
      <Tab $w={68} $on>Properties</Tab>
      <StripEnd>
        <svg width="10" height="7" viewBox="0 0 10 7" fill="none" stroke={INK} strokeWidth="1.400"><path d="M1 .3l3.200 3.200L1 6.700M5.800 .3L9 3.500 5.800 6.700" /></svg>
        <svg width="1" height="11"><rect width="1" height="11" fill="#8a8a8a" /></svg>
        <PanelMenuIcon />
      </StripEnd>
    </TabStrip>
    <KindRow>
      <IconButton $on aria-label="Shape"><TransformIcon /></IconButton>
      <svg width="17" height="13" viewBox="0 0 17 13"><rect width="17" height="13" fill={INK} /><circle cx="8.500" cy="6.500" r="4.300" fill="#f4f4f4" /></svg>
      <span>Live Shape Properties</span>
    </KindRow>
    <PropsArea>
      <PropsBody>
        <PropRow $h={17} $pad={10}>
          <Label $w={18} htmlFor="pw">W:</Label><Field $w={56} id="pw" defaultValue="589 px" />
          <Spacer $w={12} /><LinkIcon /><Spacer $w={11} />
          <Label $w={18} htmlFor="ph">H:</Label><Field $w={56} id="ph" defaultValue="161 px" />
        </PropRow>
        <Gap $h={10} />
        <PropRow $h={17} $pad={11}>
          <Label $w={17} htmlFor="px">X:</Label><Field $w={57} id="px" defaultValue="163 px" />
          <Spacer $w={36} />
          <Label $w={17} htmlFor="py">Y:</Label><Field $w={57} id="py" defaultValue="273 px" />
        </PropRow>
        <Gap $h={11} />
        <PropRow $h={20}>
          <Swatch aria-label="Fill colour"><SwatchFill /></Swatch>
          <Spacer $w={4} />
          <Swatch aria-label="Stroke colour"><NoStroke /></Swatch>
          <Spacer $w={4} />
          <ComboBox $w={63}><input aria-label="Stroke width" defaultValue="0 px" /><button aria-label="Stroke width list"><Chevron /></button></ComboBox>
          <Spacer $w={6} />
          <SelectBox $w={51} $h={19}>
            <select aria-label="Stroke type"><option></option></select>
            <OverLeft $x={3}><StrokeLine w={31} /></OverLeft>
            <OverRight><Chevron /></OverRight>
          </SelectBox>
        </PropRow>
        <Gap $h={4} />
        <PropRow $h={15} $gap={4}>
          <SelectBox $w={64} $h={15}>
            <select aria-label="Stroke alignment"><option></option></select>
            <OverLeft $x={9}><TransformIcon s={13} fill="#b0b0b0" /></OverLeft>
            <OverRight><Chevron /></OverRight>
          </SelectBox>
          <SelectBox $w={66} $h={15}>
            <select aria-label="Line cap"><option></option></select>
            <OverLeft><svg width="13" height="12" viewBox="0 0 13 12" fill="none" stroke={INK}><path d="M12 .5H4.500v11H12M4 6h8" strokeWidth="1.200" /><rect x="2" y="4" width="4" height="4" fill={INK} stroke="none" /></svg></OverLeft>
            <OverRight><Chevron /></OverRight>
          </SelectBox>
          <SelectBox $w={51} $h={15}>
            <select aria-label="Line join"><option></option></select>
            <OverLeft><svg width="13" height="12" viewBox="0 0 13 12" fill="none" stroke={INK}><path d="M1 12V.6h11.500" strokeWidth="1.200" /><path d="M2 2.500h10" stroke="#ddd" strokeWidth="2" /><path d="M6 12V6h6M10 12V9h2.500" strokeWidth="1.200" /><rect x="4" y="4" width="4" height="4" fill={INK} stroke="none" /></svg></OverLeft>
            <OverRight><Chevron /></OverRight>
          </SelectBox>
        </PropRow>
        <Gap $h={13} />
        <PropRow $h={17} $pad={24}><Field $w={171} aria-label="Corner radii" defaultValue="80.5px80.5px80.5px80.5px" /></PropRow>
        <Gap $h={6} />
        <PropRow $h={17} $pad={10}>
          <CornerIcon rot={0} /><Spacer $w={7} />
          <Field $w={68} aria-label="Top left radius" defaultValue="80.5 px" /><Spacer $w={4} />
          <Field $w={68} aria-label="Top right radius" defaultValue="80.5 px" /><Spacer $w={8} />
          <CornerIcon rot={90} />
        </PropRow>
        <Gap $h={6} />
        <PropRow $h={27} $pad={88}><IconButton $on $w={26} $h={27} aria-label="Link radii"><LinkIcon /></IconButton></PropRow>
        <Gap $h={5} />
        <PropRow $h={17} $pad={10}>
          <CornerIcon rot={270} /><Spacer $w={7} />
          <Field $w={68} aria-label="Bottom left radius" defaultValue="80.5 px" /><Spacer $w={4} />
          <Field $w={68} aria-label="Bottom right radius" defaultValue="80.5 px" /><Spacer $w={8} />
          <CornerIcon rot={180} />
        </PropRow>
        <Gap $h={12} />
        <PropRow $h={24} $pad={35}>
          <OpButton $on aria-label="Combine shapes"><svg width="15" height="15" viewBox="0 0 15 15"><path d="M1 1h9v4.500h4V14H5V9.500H1z" fill="#9c9c9c" stroke={INK} strokeWidth="1.200" /></svg></OpButton>
          <OpButton aria-label="Subtract front shape"><svg width="15" height="15" viewBox="0 0 15 15" strokeWidth="1.200"><path d="M1 1h9v4H5v5H1z" fill="#d8d8d8" stroke={INK} /><rect x="5" y="5" width="9" height="9" fill="#fff" stroke="#8a8a8a" /></svg></OpButton>
          <OpButton aria-label="Intersect shapes"><svg width="15" height="15" viewBox="0 0 15 15" strokeWidth="1.200" fill="none"><rect x="1" y="1" width="9" height="9" stroke="#8a8a8a" /><rect x="5" y="5" width="9" height="9" stroke="#8a8a8a" /><rect x="5" y="5" width="5" height="5" fill="#d8d8d8" stroke={INK} /></svg></OpButton>
          <OpButton aria-label="Exclude overlapping shapes"><svg width="15" height="15" viewBox="0 0 15 15" strokeWidth="1.200" stroke={INK}><rect x="1" y="1" width="9" height="9" fill="#ccc" /><rect x="5" y="5" width="9" height="9" fill="#ccc" /><rect x="5" y="5" width="5" height="5" fill="#fff" /></svg></OpButton>
        </PropRow>
        <HighlightBox />
      </PropsBody>
      <PropsScroll />
    </PropsArea>
    <PanelFoot><GripH /></PanelFoot>
  </Floating>
);

/* ---------- right dock ---------- */

const Dock = styled.aside`
  display: flex;
  flex-direction: column;
  width: 281px;
  border-left: 2px solid ${LINE};
  border-right: 1px solid ${LINE};
  flex: none;
`;
const DockHeadLeft = styled.span`
  padding-left: 20px;
`;
const DockBody = styled.div`
  display: flex;
  flex: 1;
  min-height: 0;
`;
const IconStrip = styled.div`
  width: 38px;
  flex: none;
`;
const StripGroup = styled.div`
  display: flex;
  flex-direction: column;
  align-items: center;
  height: 69px;
  padding: 3px 0 0;
  gap: 4px;
  border-bottom: 1px solid ${LINE};
`;
const PanelColumn = styled.div`
  display: flex;
  flex-direction: column;
  flex: 1;
  min-width: 0;
  border-left: 2px solid ${LINE};
`;
const Divider = styled.div`
  height: 3px;
  border-top: 1px solid ${LINE};
  border-bottom: 1px solid ${LINE};
  background: #e3e3e3;
  flex: none;
`;
const ColorBody = styled.div`
  display: flex;
  align-items: flex-start;
  height: 135px;
  padding: 7px 0 0 9px;
`;
const Spectrum = styled.div`
  position: relative;
  width: 141px;
  height: 107px;
  margin-left: 6px;
  background: linear-gradient(to top, #000, transparent), linear-gradient(to right, #fff, #f00);
  overflow: hidden;
`;
const Hue = styled.div`
  width: 19px;
  height: 107px;
  background: linear-gradient(#f00, #f0f, #00f, #0ff, #0f0, #ff0, #f00);
`;
const Ring = styled.svg`
  position: absolute;
  left: -5px;
  top: 10px;
`;
const HuePointer = styled.svg`
  margin: 102px 2px 0 7px;
`;
const AdjBody = styled.div`
  height: 134px;
  color: #5c5c5c;
  padding-top: 6px;
  p { margin: 0 0 0 9px; line-height: 11px; }
`;
const AdjRow = styled.div<{ $pad: number }>`
  display: flex;
  padding-left: ${(p) => p.$pad}px;
`;

const adjustments: { pad: number; items: [string, React.ReactNode][] }[] = [
  { pad: 43, items: [
    ['Brightness', <g stroke={INK}><circle cx="9" cy="9" r="3.500" fill="#fff" strokeWidth="1.300" /><path d="M9 5.500a3.500 3.500 0 0 1 0 7z" fill={INK} /><path d="M9 1v2M9 15v2M1 9h2M15 9h2M3.300 3.300l1.500 1.500M13.200 13.200l1.500 1.500M14.700 3.300l-1.500 1.500M4.800 13.200l-1.500 1.500" strokeWidth="1.300" /></g>],
    ['Levels', <path d="M0 14V9l1-2 1 3 1-3 1 2 1-4 1 3 1-5 1 5 1-3 1 2 1-4 1 5 1-2 1 3 1-3 1 4 1-2 1 2v4z" fill={INK} />],
    ['Curves', <g fill="none" stroke="#8a8a8a"><rect x="1.500" y="2.500" width="15" height="12" fill="#f6f6f6" /><path d="M6.500 2v12M11.500 2v12M1 6.500h15M1 10.500h15" /><path d="M2 14c7 0 6-11 14-11.500" stroke={INK} strokeWidth="1.400" /></g>],
    ['Exposure', <><rect x="1.500" y="3.500" width="15" height="12" fill="#fff" stroke={INK} strokeWidth="1.200" /><path d="M17 3v13H1z" fill={INK} /><path d="M3.500 7.500h4M5.500 5.500v4" stroke={INK} /><path d="M10.500 12.500h4" stroke="#fff" /></>],
    ['Vibrance', <path d="M2.500 3.500h13L9 15.500z" fill="#c4c4c4" stroke={INK} strokeWidth="1.200" />],
  ] },
  { pad: 31, items: [
    ['Hue', <><defs><linearGradient id="a1"><stop stopColor="#555" /><stop offset="1" stopColor="#fff" /></linearGradient></defs><rect x="1.500" y="3.500" width="15" height="12" fill="#eee" stroke={INK} strokeWidth="1.200" /><path d="M2 4h3v5H2zM7 4h2v5H7zM11 4h1v5h-1z" fill="#999" /><rect x="2" y="10" width="14" height="5" fill="url(#a1)" /><path d="M2 9.500h14" stroke={INK} /></>],
    ['Colour balance', <g fill="none" stroke={INK}><path d="M3 5.500h4.500M10.500 5.500H15" /><circle cx="9" cy="4.500" r="1.400" /><path d="M3.500 6L1 11.500M3.500 6L6 11.500M14.500 6L12 11.500M14.500 6L17 11.500" /><path d="M.5 11.500h6.300a3.100 3.600 0 0 1-6.300 0z" fill={INK} /><path d="M11.500 11.500h6a3.100 3.600 0 0 1-6 0z" fill={INK} /></g>],
    ['Black and white', <><rect x="1.500" y="3.500" width="15" height="12" fill="#fff" stroke={INK} strokeWidth="1.200" /><path d="M9 3h8v13H9z" fill={INK} /></>],
    ['Photo filter', <><path d="M1 5h3l1-1.500h5L11 5h4v9H1z" fill={INK} /><circle cx="7.500" cy="9" r="2.800" fill="none" stroke="#fff" strokeWidth="1.400" /><circle cx="14" cy="13.500" r="3.300" fill="#f0f0f0" stroke={INK} /></>],
    ['Channel mixer', <><circle cx="9" cy="6.500" r="5" fill="#a4a4a4" /><circle cx="5.500" cy="12" r="4.800" fill="#474747" /><circle cx="12.500" cy="12" r="4.800" fill="#8c8c8c" /><path d="M4.500 8C8 6 10 6 13.500 8c-.5 3-2 5-4.500 6.500C6.500 13 5 11 4.500 8z" fill="#dcdcdc" /></>],
    ['Colour lookup', <g fill="none" stroke={INK}><rect x="1.500" y="3.500" width="15" height="12" fill="#f6f6f6" /><path d="M7 8h5v7H7z" fill="#b5b5b5" stroke="none" /><path d="M12 4h4v11h-4z" fill="#8a8a8a" stroke="none" /><path d="M6.500 3v12M11.500 3v12M1 7.500h15M1 11.500h15" strokeWidth="1.200" /></g>],
  ] },
  { pad: 43, items: [
    ['Invert', <><rect x="1.500" y="3.500" width="15" height="12" fill="#fff" stroke={INK} strokeWidth="1.200" /><path d="M1 3h16L1 16z" fill={INK} /><circle cx="9" cy="9.500" r="3.800" fill={INK} /><path d="M11.800 7A3.800 3.800 0 0 0 6.300 12z" fill="#fff" /></>],
    ['Posterize', <><rect x="1.500" y="3.500" width="15" height="12" fill="#e2e2e2" stroke={INK} strokeWidth="1.200" /><path d="M2 10c5 0 7-4 11-6h3v1c-5 1-8 6-14 8z" fill="#777" /><path d="M2 15c6 0 9-5 14-7V6c-5 1-8 7-14 7z" fill="#4a4a4a" /><path d="M9 15c3-1 5-3 7-3.500V13l-3 2z" fill="#aaa" /></>],
    ['Threshold', <><rect x="1.500" y="3.500" width="15" height="12" fill="#fff" stroke={INK} strokeWidth="1.200" /><path d="M2 4h9v1H9v1H7v1H5v1H2zM2 15v-2h4v-1h2v-1h2v-1h3V9h3v4h-3v1h-3v1z" fill={INK} /></>],
    ['Selective colour', <><rect x="1.500" y="3.500" width="15" height="12" fill="#bdbdbd" stroke={INK} strokeWidth="1.200" /><path d="M1 3h16L9 9.500z" fill={INK} /><path d="M2 15l7-5.500 7 5.500z" fill="#8a8a8a" /></>],
    ['Gradient map', <><defs><linearGradient id="a2"><stop stopColor="#444" /><stop offset="1" stopColor="#fff" /></linearGradient></defs><rect x="1.500" y="3.500" width="15" height="12" fill="url(#a2)" stroke={INK} strokeWidth="1.200" /></>],
  ] },
];

const FilterRow = styled.div<{ $h: number; $line?: boolean; $top?: number; $bottom?: number }>`
  display: flex;
  align-items: center;
  height: ${(p) => p.$h}px;
  padding: ${(p) => p.$top ?? 0}px 7px ${(p) => p.$bottom ?? 0}px 3px;
  border-bottom: ${(p) => (p.$line ? `1px solid ${LINE}` : '0')};
  flex: none;
`;
const IconRun = styled.div<{ $gap: number }>`
  display: flex;
  align-items: center;
  gap: ${(p) => p.$gap}px;
`;
const RightPart = styled.div`
  display: flex;
  align-items: center;
  gap: 4px;
  margin-left: auto;
`;
const ToggleTrack = styled.span`
  width: 10px;
  height: 18px;
  border-radius: 5px;
  background: #fdfdfd;
  border: 1px solid #ddd;
  svg { margin: -1px; }
`;
const LayersList = styled.div`
  flex: 1;
  min-height: 0;
  background: #e7e7e7;
  border-right: 16px solid #e3e3e3;
`;
const LayerRow = styled.div<{ $on?: boolean }>`
  display: flex;
  height: 35px;
  border-bottom: 1px solid ${LINE};
  background: ${(p) => (p.$on ? '#b4b4b4' : PANEL)};
`;
const EyeCell = styled.button`
  display: grid;
  place-items: center;
  width: 30px;
  padding-left: 2px;
  background: ${PANEL};
  border-right: 1px solid ${LINE};
`;
const LayerMain = styled.div<{ $italic?: boolean }>`
  display: flex;
  align-items: center;
  flex: 1;
  gap: 7px;
  padding: 0 16px 0 2px;
  font-style: ${(p) => (p.$italic ? 'italic' : 'normal')};
  > svg:last-child:not(:first-child) { margin-left: auto; }
`;
const LayersFoot = styled.div`
  display: flex;
  align-items: center;
  height: 27px;
  border-top: 1px solid ${LINE};
  padding-left: 29px;
  flex: none;
`;
const FootButton = styled(IconButton)`
  position: relative;
  width: 27px;
`;
const Fx = styled.span`
  font: italic 600 13px/16px ${UI};
`;
const MenuMark = styled.svg`
  position: absolute;
  right: 4px;
  bottom: 3px;
`;

const Eye = () => (
  <svg width="13" height="9" viewBox="0 0 13 9"><path d="M.8 4.500C3.500.3 9.500.3 12.200 4.500 9.500 8.700 3.500 8.700.8 4.500z" fill="#f4f4f4" stroke={INK} strokeWidth="1.300" /><circle cx="6.500" cy="4.300" r="2.500" fill={INK} /><circle cx="6.500" cy="3.900" r=".8" fill="#fff" /></svg>
);

const DownMark = () => (
  <MenuMark width="4" height="2" viewBox="0 0 4 2"><path d="M0 0h4L2 2z" fill="#000" /></MenuMark>
);

const checker: number[][] = [];
for (let r = 0; r < 6; r++) for (let c = 0; c < 7; c++) if ((r + c) % 2) checker.push([c, r]);

const ShapeThumb = () => (
  <svg width="36" height="32" viewBox="0 0 36 32">
    <rect x="3.500" y="4.500" width="29" height="23" fill="#fff" stroke={INK} />
    {checker.map(([c, r]) => <rect key={`${c}${r}`} x={4 + c * 4} y={5 + r * 4} width={4} height={r === 5 ? 2 : 4} fill="#cfcfcf" />)}
    <rect x="9" y="13" width="17" height="7" rx="3" fill="#d9d9d9" />
    <path d="M12 1.500H1.500V11M24 1.500h10.500V11M12 30.500H1.500V21M24 30.500h10.500V21" fill="none" stroke="#000" />
    <rect x="20.500" y="15.500" width="14" height="13" fill="#b4b4b4" stroke={INK} />
    <path d="M23.500 18.500h8v8h-8z" fill="none" stroke={INK} /><path d="M22 17h3v3h-3zM30 17h3v3h-3zM22 25h3v3h-3zM30 25h3v3h-3z" fill={INK} />
  </svg>
);

const RightDock = () => (
  <Dock>
    <DockHead>
      <DockHeadLeft><DoubleArrow left /></DockHeadLeft>
      <DoubleArrow />
    </DockHead>
    <DockBody>
      <IconStrip>
        <StripGroup>
          <GripH />
          <IconButton $w={30} $h={24} aria-label="Character"><svg width="16" height="16" viewBox="0 0 16 16"><path d="M.5 14L5.300 2h2L12 14h-2l-1.200-3.200H3.700L2.500 14zm3.800-4.800h3.900L6.300 4z" fill={INK} /><path d="M14.500 0v16" stroke={INK} strokeWidth="1.200" /></svg></IconButton>
          <IconButton $w={30} $h={24} aria-label="Paragraph"><svg width="14" height="16" viewBox="0 0 14 16"><path d="M7 1H5.500a4 4 0 0 0 0 8.500H7z" fill={INK} /><path d="M5.500 1.500H13M8.500 1v15M11.500 1v15" stroke={INK} strokeWidth="1.200" /></svg></IconButton>
        </StripGroup>
        <StripGroup>
          <GripH />
          <IconButton $w={30} $h={24} aria-label="History"><svg width="16" height="17" viewBox="0 0 16 17"><g fill="none" stroke={INK} strokeWidth="1.200"><rect x="1" y=".7" width="4" height="4" /><rect x="1" y="6.700" width="4" height="4" /></g><rect x=".4" y="12" width="5.200" height="5" fill={INK} /><path d="M13 5c2.500 3 1.500 7.500-2.500 10.500" fill="none" stroke={INK} strokeWidth="1.700" /><path d="M8 1.500h6L8.500 8z" fill={INK} /></svg></IconButton>
          <IconButton $w={30} $h={24} $on aria-label="Properties"><svg width="16" height="17" viewBox="0 0 16 17"><path d="M5 1l4.300 2v5L5 10.500.7 8V3z" fill="#9a9a9a" stroke={INK} /><path d="M.7 3L5 5.300 9.300 3M5 5.300v5" fill="none" stroke={INK} /><path d="M11.500 1H16v4h-4.500zM11.500 6H16v4h-4.500zM0 12.500h16v4.500H0z" fill={INK} /><path d="M11.500 14h3l-1.500 1.600z" fill="#fff" /></svg></IconButton>
        </StripGroup>
      </IconStrip>
      <PanelColumn>
        <TabStrip>
          <Tab $w={45} $on>Color</Tab>
          <Tab $w={64}>Swatches</Tab>
          <StripEnd><PanelMenuIcon /></StripEnd>
        </TabStrip>
        <ColorBody>
          <svg width="30" height="34" viewBox="0 0 30 34">
            <rect x="10.500" y="13.500" width="19" height="19" fill="#fff" stroke="#7a7a7a" />
            <rect x=".5" y="3.500" width="19" height="19" fill={SUNK} stroke="#5a5a5a" /><rect x="1.500" y="4.500" width="17" height="17" fill="none" stroke="#fff" />
          </svg>
          <Spectrum><Ring width="12" height="12" viewBox="0 0 12 12"><circle cx="6" cy="6" r="4.800" fill="none" stroke="#000" strokeWidth="1.200" /></Ring></Spectrum>
          <HuePointer width="8" height="9" viewBox="0 0 8 9"><path d="M1 1.500Q1 .5 2.500.5L7.300 4.500 2.500 8.500Q1 8.500 1 7.500z" fill="#fff" stroke="#8a8a8a" /></HuePointer>
          <Hue />
        </ColorBody>
        <Divider />
        <TabStrip>
          <Tab $w={45}>Learn</Tab>
          <Tab $w={60}>Libraries</Tab>
          <Tab $w={79} $on>Adjustments</Tab>
          <StripEnd><PanelMenuIcon /></StripEnd>
        </TabStrip>
        <AdjBody>
          <p>Add an adjustment</p>
          {adjustments.map((row, i) => (
            <AdjRow key={i} $pad={row.pad}>
              {row.items.map(([name, art]) => (
                <IconButton key={name} $w={24} $h={26} aria-label={name}><svg width="18" height="18" viewBox="0 0 18 18">{art}</svg></IconButton>
              ))}
            </AdjRow>
          ))}
        </AdjBody>
        <Divider />
        <TabStrip>
          <Tab $w={49} $on>Layers</Tab>
          <Tab $w={61}>Channels</Tab>
          <Tab $w={46}>Paths</Tab>
          <StripEnd><PanelMenuIcon /></StripEnd>
        </TabStrip>
        <FilterRow $h={32} $line $top={5}>
          <KindSelect $w={88} $h={21}>
            <OverLeft><svg width="11" height="11" viewBox="0 0 12 12" fill="none" stroke="#000"><circle cx="5" cy="5" r="3.600" strokeWidth="1.600" /><path d="M7.700 7.700L11 11" strokeWidth="2.400" /></svg></OverLeft>
            <select aria-label="Filter kind"><option>Kind</option></select>
            <OverRight><Chevron /></OverRight>
          </KindSelect>
          <Spacer $w={11} />
          <IconRun $gap={12}>
            <svg width="13" height="12" viewBox="0 0 13 12"><rect x=".6" y="1" width="11.500" height="9.500" fill="#f6f6f6" stroke={INK} strokeWidth="1.200" /><path d="M2.500 8.500l2-4 1.500 2.500L8 4l2.500 4.500z" fill={INK} /></svg>
            <ContrastIcon />
            <TypeIcon s={11} />
            <TransformIcon s={12} />
            <svg width="12" height="13" viewBox="0 0 12 13" fill="#f4f4f4" stroke={INK} strokeWidth="1.200"><path d="M3 .7h5L11 4v8H3z" /><path d="M8 .7V4h3" /><rect x=".7" y="6" width="6" height="6" /></svg>
          </IconRun>
          <RightPart><ToggleTrack><svg width="10" height="10" viewBox="0 0 10 10"><circle cx="5" cy="5" r="4.200" fill={INK} /></svg></ToggleTrack></RightPart>
        </FilterRow>
        <FilterRow $h={28} $line>
          <SelectBox $w={130} $h={21}>
            <select aria-label="Blend mode"><option>Normal</option></select>
            <OverRight><Chevron /></OverRight>
          </SelectBox>
          <RightPart><Label htmlFor="op">Opacity:</Label><ComboBox $w={52}><input id="op" defaultValue="100%" /><button aria-label="Opacity list"><Chevron /></button></ComboBox></RightPart>
        </FilterRow>
        <FilterRow $h={30} $bottom={2}>
          <Spacer $w={3} />
          <Caption $w={32}>Lock:</Caption>
          <IconRun $gap={9}>
            <svg width="12" height="12" viewBox="0 0 12 12"><rect x=".5" y=".5" width="11" height="11" fill="#fff" stroke="#8a8a8a" /><path d="M1 1h2.500v2.500H1zM6 1h2.500v2.500H6zM3.500 3.500H6V6H3.500zM8.500 3.500H11V6H8.500zM1 6h2.500v2.500H1zM6 6h2.500v2.500H6zM3.500 8.500H6V11H3.500zM8.500 8.500H11V11H8.500z" fill="#bbb" /></svg>
            <svg width="14" height="14" viewBox="4 4 16 16"><BrushPaths color="#8f8f8f" /></svg>
            <svg width="13" height="13" viewBox="0 0 16 16"><path d="M8 2v12M2 8h12" stroke={INK} strokeWidth="1.400" /><path d="M8 0l3 3.600H5zM8 16l3-3.600H5zM0 8l3.600-3v6zM16 8l-3.600-3v6z" fill={INK} /></svg>
            <svg width="14" height="13" viewBox="0 0 14 13" fill="none" stroke={INK}><path d="M2.500 0v2M0 2.500h2M3 2.500h5.500L11 5v5.500H2.500V3M12 10.500h2M11 11v2M2.500 11v2M0 10.500h2M8 3v2.500h3" strokeWidth="1.200" /></svg>
            <svg width="11" height="12" viewBox="0 0 11 12"><rect x=".5" y="5" width="10" height="7" rx="1" fill={INK} /><path d="M2.700 5.500V4a2.800 2.800 0 0 1 5.600 0v1.500" fill="none" stroke={INK} strokeWidth="1.500" /><circle cx="5.500" cy="8.500" r="1" fill="#fff" /></svg>
          </IconRun>
          <RightPart><Label htmlFor="lf">Fill:</Label><ComboBox $w={52}><input id="lf" defaultValue="100%" /><button aria-label="Fill list"><Chevron /></button></ComboBox></RightPart>
        </FilterRow>
        <LayersList>
          <LayerRow $on>
            <EyeCell aria-label="Toggle Rounded Rectangle 1"><Eye /></EyeCell>
            <LayerMain><ShapeThumb />Rounded Rectangle 1</LayerMain>
          </LayerRow>
          <LayerRow>
            <EyeCell aria-label="Toggle Background"><Eye /></EyeCell>
            <LayerMain $italic>
              <svg width="36" height="26" viewBox="0 0 36 26"><rect x="2.500" y=".5" width="31" height="25" fill="#fff" stroke={INK} /></svg>
              Background
              <svg width="11" height="12" viewBox="0 0 11 12" fill="none" stroke={INK} strokeWidth="1.200"><rect x=".8" y="4.800" width="9.400" height="6.500" /><path d="M3 4.500V3.300a2.500 2.500 0 0 1 5 0v1.200" /><path d="M5.500 7.200v1.600" /></svg>
            </LayerMain>
          </LayerRow>
        </LayersList>
        <LayersFoot>
          <FootButton aria-label="Link layers"><LinkIcon color="#a0a0a0" /></FootButton>
          <FootButton aria-label="Layer style"><Fx>fx</Fx><DownMark /></FootButton>
          <FootButton aria-label="Add mask"><svg width="13" height="10" viewBox="0 0 13 10"><rect width="13" height="10" fill={INK} /><circle cx="6.500" cy="5" r="2.900" fill="#fff" /></svg></FootButton>
          <FootButton aria-label="New adjustment layer"><ContrastIcon /><DownMark /></FootButton>
          <FootButton aria-label="New group"><svg width="13" height="11" viewBox="0 0 13 11"><path d="M.6 1h4l1.200 1.500h6.600v7.900H.6z" fill="#d0d0d0" stroke={INK} strokeWidth="1.100" /></svg></FootButton>
          <FootButton aria-label="New layer"><svg width="11" height="11" viewBox="0 0 11 11"><path d="M.6.6h9.800v9.800H4.600L.6 6.400z" fill="#d0d0d0" stroke={INK} strokeWidth="1.100" /><path d="M.6 6h4.200v4.400z" fill="#fff" stroke={INK} /></svg></FootButton>
          <FootButton aria-label="Delete layer"><svg width="11" height="12" viewBox="0 0 11 12" fill="none" stroke={INK} strokeWidth="1.100"><path d="M0 2.500h11M3.700 2.500v-2h3.600v2M1.500 2.500v9h8v-9M3.700 4.500v5.500M5.500 4.500v5.500M7.300 4.500v5.500" /></svg></FootButton>
        </LayersFoot>
      </PanelColumn>
    </DockBody>
  </Dock>
);

export default function App() {
  return (
    <Shell>
      <Global />
      <TopMenu />
      <Options />
      <Main>
        <ToolBox />
        <Document />
        <RightDock />
      </Main>
    </Shell>
  );
}
